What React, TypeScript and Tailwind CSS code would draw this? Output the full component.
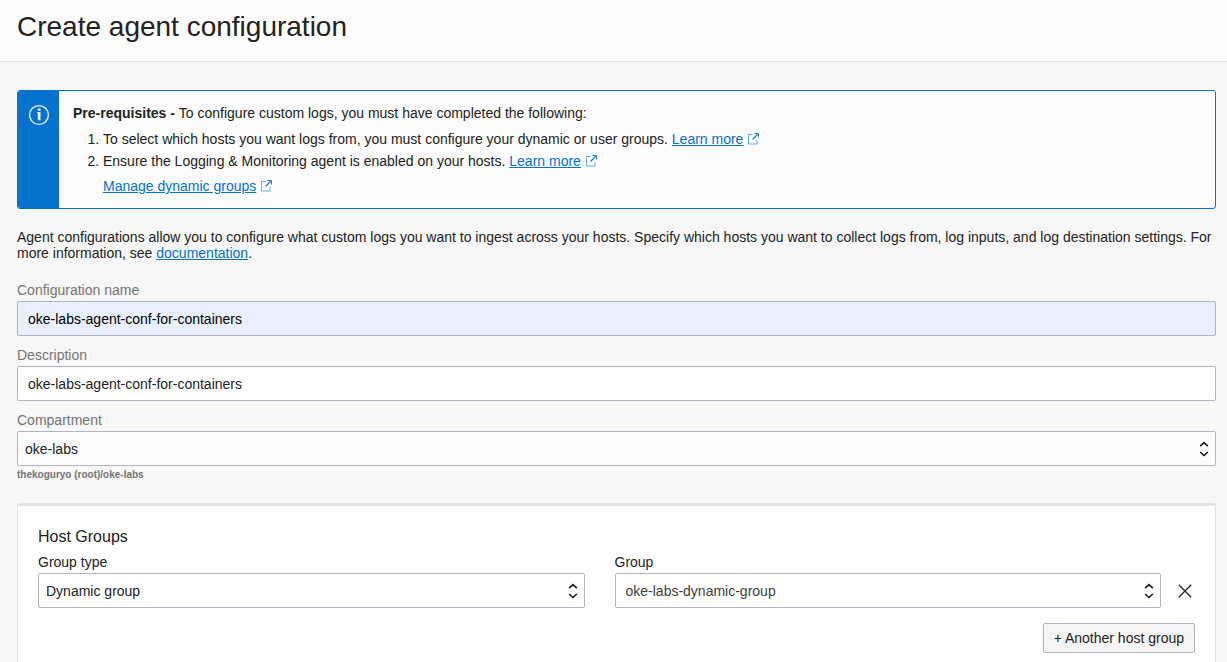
import type { ReactNode } from "react";

function ExternalIcon() {
  return (
    <svg
      aria-hidden="true"
      viewBox="0 0 12 12"
      className="ml-1 inline-block h-3 w-3 align-[-1px] text-[#1f7fd2]"
      fill="none"
      stroke="currentColor"
    >
      <path d="M5.5 1.5H1.5v9.5h8.5V7" strokeOpacity="0.65" />
      <path d="M5.5 6.5l5.5-5.5" strokeWidth="1.2" />
      <path d="M7.5 .5h4v4" />
    </svg>
  );
}

function ExternalLink({ children }: { children: ReactNode }) {
  return (
    <a href="#" className="text-[#0572ce]">
      <span className="underline">{children}</span>
      <ExternalIcon />
    </a>
  );
}

function SelectBox({
  id,
  label,
  value,
  labelClass,
  selectClass,
}: {
  id: string;
  label: string;
  value: string;
  labelClass: string;
  selectClass: string;
}) {
  return (
    <div className="min-w-0 flex-1">
      <label htmlFor={id} className={`mb-[3px] block ${labelClass}`}>
        {label}
      </label>
      <div className="relative">
        <select
          id={id}
          defaultValue={value}
          className={`block h-[35px] w-full appearance-none rounded-[2px] border border-[#aeb5c0] pr-8 ${selectClass}`}
        >
          <option value={value}>{value}</option>
        </select>
        <svg
          aria-hidden="true"
          viewBox="0 0 10 16"
          className="pointer-events-none absolute top-[10px] right-[7px] h-4 w-[10px]"
          fill="none"
          stroke="#161513"
          strokeWidth="1.6"
        >
          <path d="M1.2 5.2 5 1.7 8.8 5.2M1.2 11 5 14.5 8.8 11" />
        </svg>
      </div>
    </div>
  );
}

function TextField({
  id,
  label,
  value,
  inputClass,
}: {
  id: string;
  label: string;
  value: string;
  inputClass: string;
}) {
  return (
    <div>
      <label htmlFor={id} className="mb-[3px] block text-[#757575]">
        {label}
      </label>
      <input
        id={id}
        type="text"
        defaultValue={value}
        className={`block h-[35px] w-full rounded-[2px] border border-[#aeb5c0] px-[10px] ${inputClass}`}
      />
    </div>
  );
}

export default function App() {
  return (
    <div className="h-screen overflow-hidden bg-[#f7f7f7] font-['Liberation_Sans',Arial,sans-serif] text-[14px] leading-4 text-[#222]">
      <header className="border-b border-[#e3e3e6] bg-[#fcfcfc] pt-[11px] pr-3 pb-[18px] pl-[17px]">
        <h1 className="text-[28px] leading-8">Create agent configuration</h1>
      </header>

      <main className="pt-7 pr-[11px] pl-[17px]">
        <section className="flex overflow-hidden rounded-[3px] border border-[#0572ce] bg-[#fcfcfc]">
          <div className="flex w-[41px] shrink-0 justify-center bg-[#0572ce] pt-[13px]">
            <svg aria-hidden="true" viewBox="0 0 22 22" className="h-[22px] w-[22px]">
              <circle cx="11" cy="11" r="9.4" fill="none" stroke="#e6f1fb" strokeWidth="1.4" />
              <path d="M9.8 4.4h2.7v2.3H9.8zM9 8h3.5v8.2H9.8V9H9z" fill="#f0f7fd" />
            </svg>
          </div>
          <div className="py-[14px] pr-4 pl-[14px]">
            <p>
              <strong>Pre-requisites - </strong>To configure custom logs, you must have completed the
              following:
            </p>
            <ol className="mt-[7px] list-decimal pl-[30px] leading-[22px]">
              <li>
                To select which hosts you want logs from, you must configure your dynamic or user
                groups. <ExternalLink>Learn more</ExternalLink>
              </li>
              <li>
                Ensure the Logging &amp; Monitoring agent is enabled on your hosts.{" "}
                <ExternalLink>Learn more</ExternalLink>
              </li>
            </ol>
            <p className="mt-[6px] pl-[30px]">
              <ExternalLink>Manage dynamic groups</ExternalLink>
            </p>
          </div>
        </section>

        <p className="mt-5">
          Agent configurations allow you to configure what custom logs you want to ingest across your
          hosts. Specify which hosts you want to collect logs from, log inputs, and log destination
          settings. For more information, see{" "}
          <a href="#" className="text-[#0572ce] underline">
            documentation
          </a>
          .
        </p>

        <form>
          <div className="mt-[21px] flex flex-col gap-[11px]">
            <TextField
              id="name"
              label="Configuration name"
              value="oke-labs-agent-conf-for-containers"
              inputClass="bg-[#e8f0fe] text-black"
            />
            <TextField
              id="description"
              label="Description"
              value="oke-labs-agent-conf-for-containers"
              inputClass="bg-white"
            />
            <SelectBox
              id="compartment"
              label="Compartment"
              value="oke-labs"
              labelClass="text-[#757575]"
              selectClass="bg-[#fcfcfc] pl-[7px]"
            />
          </div>
          <p className="mt-[3px] text-[10px] leading-3 font-bold text-[#757575]">
            thekoguryo (root)/oke-labs
          </p>

          <section className="mt-[22px] rounded-[3px] border border-t-[3px] border-[#e1e1e6] bg-white px-5 pt-[21px] pb-10">
            <h2 className="text-[16px] leading-5">Host Groups</h2>
            <div className="mt-[7px] flex items-end">
              <div className="flex min-w-0 flex-1 gap-[30px]">
                <SelectBox
                  id="group-type"
                  label="Group type"
                  value="Dynamic group"
                  labelClass=""
                  selectClass="bg-white pl-[7px]"
                />
                <SelectBox
                  id="group"
                  label="Group"
                  value="oke-labs-dynamic-group"
                  labelClass=""
                  selectClass="bg-white pl-[10px] text-[#404040]"
                />
              </div>
              <button
                type="button"
                aria-label="Remove host group"
                className="ml-[14px] flex h-[35px] w-5 items-center justify-center"
              >
                <svg
                  aria-hidden="true"
                  viewBox="0 0 14 14"
                  className="h-[14px] w-[14px]"
                  stroke="#222"
                  strokeWidth="1.3"
                >
                  <path d="M.8.8l12.4 12.4M13.2.8L.8 13.2" />
                </svg>
              </button>
            </div>
            <div className="mt-[15px] flex justify-end">
              <button
                type="button"
                className="h-[30px] rounded-[2px] border border-[#aeb5c0] bg-[#f5f5f5] px-[10px]"
              >
                + Another host group
              </button>
            </div>
          </section>
        </form>
      </main>
    </div>
  );
}
